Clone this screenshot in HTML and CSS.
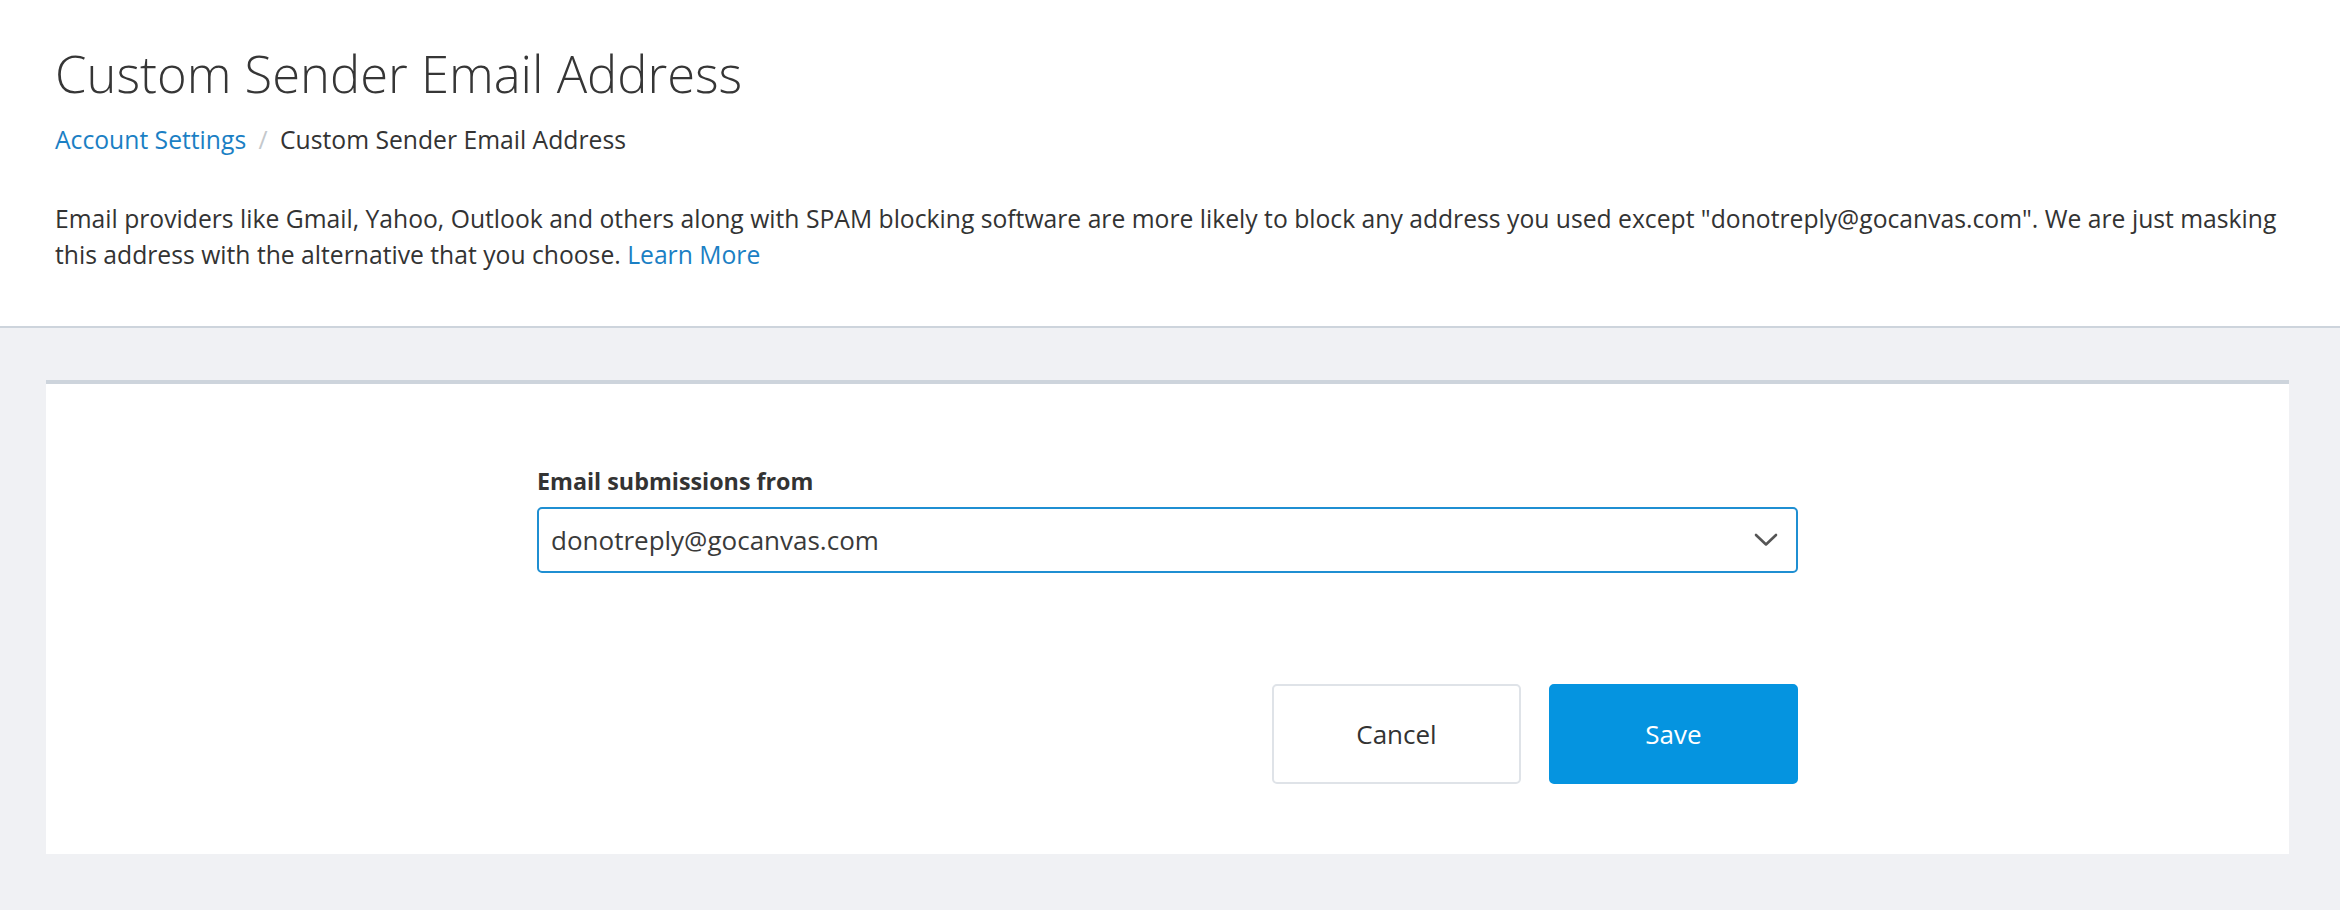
FILE: index.html
```html
<!DOCTYPE html>
<html lang="en">

<head>
    <meta charset="UTF-8" />
    <meta name="viewport" content="width=device-width, initial-scale=1.0" />
    <title>Custom Sender Email Address</title>
    <link rel="stylesheet" href="styles.css">
</head>

<body>
    <div class="page-header">
        <h1>Custom Sender Email Address</h1>
        <div class="crumbs">
            <a href="#">Account Settings</a>
            <span class="sep">/</span>
            <span>Custom Sender Email Address</span>
        </div>
        <p class="intro">
            Email providers like Gmail, Yahoo, Outlook and others along with SPAM blocking software are more likely to block any address you used except "donotreply@gocanvas.com". We are just masking this address with the alternative that you choose.
            <a href="#" class="more">Learn More</a>
        </p>
    </div>
    <div class="content">
        <div class="card">
            <div class="form">
                <label for="sender">Email submissions from</label>
                <div class="select">
                    <span id="sender">donotreply@gocanvas.com</span>
                    <svg width="24" height="14" viewBox="0 0 24 14">
                        <polyline points="2,2 12,11.5 22,2" fill="none" stroke="#555" stroke-width="2.6" stroke-linecap="round" stroke-linejoin="round" />
                    </svg>
                </div>
                <div class="actions">
                    <button class="btn">Cancel</button>
                    <button class="btn primary">Save</button>
                </div>
            </div>
        </div>
    </div>
</body>

</html>
```

FILE: styles.css
```css
* {
    margin: 0;
    padding: 0;
    box-sizing: border-box;
    --text: #333333;
    --link: #1b7fc4;
    --accent: #0594e0;
    --page-bg: #f0f1f4;
    --line: #cdd4dc;
}

body {
    font-family: "Open Sans", Lato, sans-serif;
    color: var(--text);
    background-color: var(--page-bg);
    min-height: 100vh;
}

a {
    color: var(--link);
    text-decoration: none;
}

.page-header {
    background-color: #ffffff;
    border-bottom: 2px solid var(--line);
    padding: 44px 55px 53px;
}

h1 {
    font-size: 50.7px;
    font-weight: 300;
    line-height: 60px;
    color: #363636;
}

.crumbs {
    font-size: 24.7px;
    line-height: 36px;
    margin-top: 18px;
}

.crumbs .sep {
    color: #c4c8cc;
    margin: 0 6px;
}

.intro {
    font-size: 24.7px;
    line-height: 36px;
    margin-top: 43px;
}

.intro .more {
    display: inline-block;
}

.content {
    padding: 52px 51px 54px 46px;
}

.card {
    background-color: #ffffff;
    border-top: 4px solid var(--line);
    padding: 82px 0 70px;
    display: flex;
    justify-content: center;
}

.form {
    width: 1261px;
    display: flex;
    flex-direction: column;
}

label {
    font-size: 23.3px;
    font-weight: 700;
    line-height: 30px;
    color: #333333;
}

.select {
    margin-top: 11px;
    height: 66px;
    border: 2px solid #1f8fd2;
    border-radius: 5px;
    display: flex;
    align-items: center;
    justify-content: space-between;
    padding: 0 18px 0 12px;
    font-size: 26px;
    color: #3a3a3a;
}

.actions {
    margin-top: 111px;
    display: flex;
    justify-content: flex-end;
    gap: 28px;
}

.btn {
    width: 249px;
    height: 100px;
    border: 2px solid #dfe3e8;
    border-radius: 5px;
    background-color: #ffffff;
    color: #333333;
    font-family: inherit;
    font-size: 26px;
    cursor: pointer;
}

.btn.primary {
    background-color: var(--accent);
    border-color: var(--accent);
    color: #ffffff;
}
```
